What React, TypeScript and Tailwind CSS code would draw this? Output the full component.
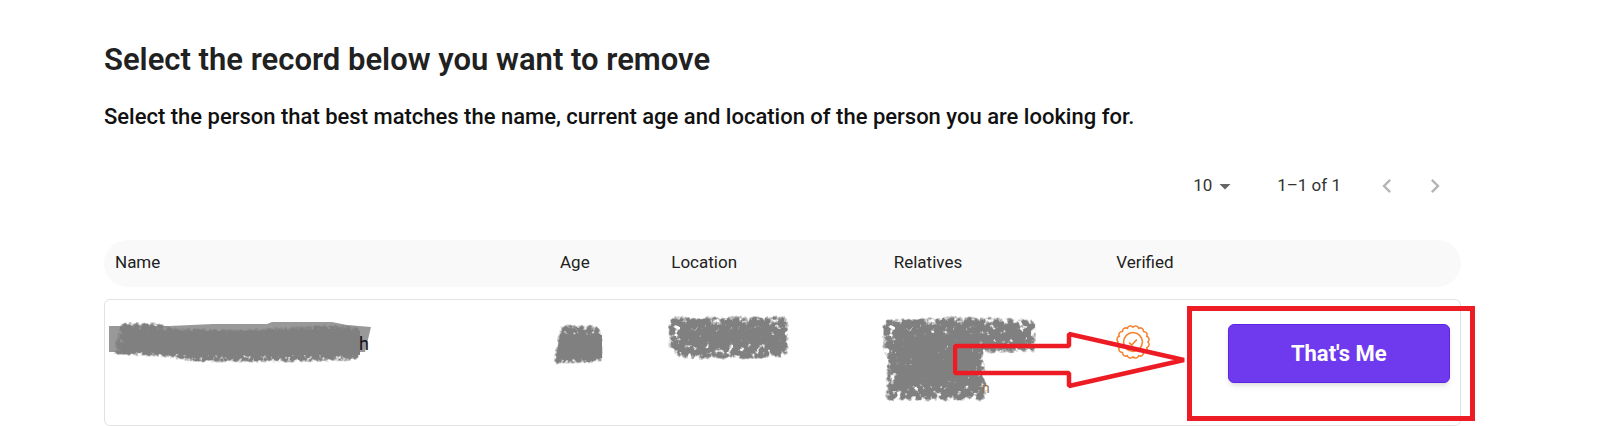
import React, { useState } from "react";

const COLUMNS = [
  { title: "Name", span: "col-span-4" },
  { title: "Age", span: "col-span-1" },
  { title: "Location", span: "col-span-2" },
  { title: "Relatives", span: "col-span-2" },
  { title: "Verified", span: "col-span-1" },
];

// scalloped outline of the badge
const scallops = (count: number, radius: number) => {
  const point = (i: number) => {
    const angle = (i / count) * Math.PI * 2;
    return `${(18 + radius * Math.cos(angle)).toFixed(2)} ${(18 + radius * Math.sin(angle)).toFixed(2)}`;
  };
  let d = `M${point(0)}`;
  for (let i = 1; i <= count; i++) {
    d += `A3.3 3.3 0 0 1 ${point(i)}`;
  }
  return d + "Z";
};

const VerifiedBadge = () => (
  <svg
    className="size-[34px]"
    viewBox="0.500 0.500 35 35"
    fill="none"
    stroke="#f5832f"
    strokeWidth="1.6"
    strokeLinejoin="round"
    role="img"
    aria-label="Verified"
  >
    <path d={scallops(16, 15.2)} />
    <circle cx="18" cy="18" r="9.7" />
    <path d="M14 18.500l2.700 2.700 5.300-5.700" />
  </svg>
);

const ChalkFilters = () => (
  <svg className="absolute size-0" aria-hidden="true">
    <filter id="chalk" x="-10%" y="-30%" width="120%" height="160%" colorInterpolationFilters="sRGB">
      <feGaussianBlur in="SourceAlpha" stdDeviation="2.6" result="soft" />
      <feTurbulence type="fractalNoise" baseFrequency="0.25" numOctaves="3" seed="4" result="noise" />
      <feComposite in="soft" in2="noise" operator="arithmetic" k1="2.4" k2="0.3" k4="-0.6" />
      <feComponentTransfer result="mask">
        <feFuncA type="linear" slope="1.6" />
      </feComponentTransfer>
      <feFlood floodColor="#808080" />
      <feComposite in2="mask" operator="in" />
    </filter>
    <filter id="mottled" x="-10%" y="-20%" width="120%" height="140%" colorInterpolationFilters="sRGB">
      <feGaussianBlur in="SourceAlpha" stdDeviation="3" result="soft" />
      <feTurbulence type="fractalNoise" baseFrequency="0.17" numOctaves="3" seed="9" result="noise" />
      <feComposite in="soft" in2="noise" operator="arithmetic" k1="3.4" k2="-0.2" k4="-0.6" />
      <feComponentTransfer result="mask">
        <feFuncA type="linear" slope="1.7" />
      </feComponentTransfer>
      <feFlood floodColor="#808080" />
      <feComposite in2="mask" operator="in" />
    </filter>
  </svg>
);

const NameScribble = () => (
  <svg className="absolute -left-2 top-4 h-16 w-72" viewBox="0 0 288 64" aria-hidden="true">
    <path d="M2 10H62L106 8L160 8L165 6H225L240 9L264 11L258 36H2Z" fill="#999" />
    <path d="M14 7L50 7L64 12L130 14L220 9L252 11V44L180 46H90L60 41L6 38Z" fill="#808080" filter="url(#chalk)" />
    <path d="M16 15H130L230 13L253 15V39H80L18 35Z" fill="#808080" />
    <text x="252" y="34" fontFamily="Roboto, sans-serif" fontSize="18" fill="#111">
      h
    </text>
  </svg>
);

const AgeScribble = () => (
  <svg className="absolute -left-2 top-4 h-16 w-16" viewBox="0 0 64 64" aria-hidden="true">
    <path d="M9 9L45 10L50 18V46L1 48Z" fill="#808080" filter="url(#chalk)" />
    <path d="M8 18L50 19V42L4 43Z" fill="#808080" />
  </svg>
);

const LocationScribble = () => (
  <svg className="absolute -left-2 top-2 h-20 w-36" viewBox="0 0 144 80" aria-hidden="true">
    <path d="M6 9H125V45L120 50H18L6 41Z" fill="#808080" filter="url(#mottled)" />
    <path d="M18 21L121 20L120 37L20 38Z" fill="#808080" filter="url(#chalk)" />
  </svg>
);

const RelativesScribble = () => (
  <svg className="absolute -left-4 top-2 h-24 w-44" viewBox="0 0 176 96" aria-hidden="true">
    <path d="M5 12L80 9L157 12V44H104L109 92H8L9 46L5 43Z" fill="#808080" filter="url(#mottled)" />
    <path d="M15 20L152 18V34L104 37V82H16Z" fill="#808080" filter="url(#mottled)" />
    <path d="M20 25L150 24V30L100 34V78H22L16 60L22 50Z" fill="#808080" filter="url(#chalk)" />
    <text x="104" y="85" fontFamily="Roboto, sans-serif" fontSize="14" fill="#95704d">
      n
    </text>
  </svg>
);

const Highlight = () => (
  <div className="pointer-events-none absolute -right-3.5 top-[66px] flex items-start" aria-hidden="true">
    <svg className="mt-6 h-[60px] w-[234px]" viewBox="0 0 234 60" fill="none" stroke="#ed1c24" strokeWidth="4.5">
      <path d="M2 16H116V4L231 30L116 56V43H2Z" strokeLinejoin="bevel" />
    </svg>
    <div className="h-[115px] w-72 border-5 border-[#ed1c24]" />
  </div>
);

const Pagination = () => {
  const [pageSize, setPageSize] = useState("10");

  return (
    <div className="mr-0.5 mt-[29px] flex h-12 items-center justify-end text-[17px] text-[#333]">
      <div className="relative mr-10 flex items-center">
        <select
          aria-label="Rows per page"
          value={pageSize}
          onChange={(e) => setPageSize(e.target.value)}
          className="w-11 appearance-none bg-transparent"
        >
          <option>10</option>
          <option>25</option>
          <option>50</option>
        </select>
        <svg className="pointer-events-none absolute right-0 size-6" viewBox="0 0 24 24" fill="#666">
          <path d="M6.500 10l5.500 5.500 5.500-5.500z" />
        </svg>
      </div>
      <span className="mr-[22px]">1–1 of 1</span>
      <button disabled aria-label="Previous page" className="flex size-12 items-center justify-center">
        <svg className="size-7" viewBox="0 0 24 24" fill="#b5b5b5">
          <path d="M15.410 7.410L14 6l-6 6 6 6 1.410-1.410L10.830 12z" />
        </svg>
      </button>
      <button disabled aria-label="Next page" className="flex size-12 items-center justify-center">
        <svg className="size-7" viewBox="0 0 24 24" fill="#b5b5b5">
          <path d="M10 6L8.590 7.410 13.170 12l-4.580 4.590L10 18l6-6z" />
        </svg>
      </button>
    </div>
  );
};

const App = () => {
  return (
    <main className="bg-white pl-[104px] pr-[139px] pt-10 font-['Roboto',sans-serif] text-[#212121]">
      <h1 className="text-[31px] font-semibold leading-10">Select the record below you want to remove</h1>
      <h2 className="mt-[21px] text-[22px] font-medium leading-8 text-[#111]">
        Select the person that best matches the name, current age and location of the person you are looking for.
      </h2>

      <Pagination />
      <ChalkFilters />

      <div className="relative mt-[30px]">
        <table className="block w-full">
          <thead className="block">
            <tr className="grid h-[47px] grid-cols-12 items-center rounded-full bg-[#f9f9f9] px-[11px] pb-0.5 text-[17px]">
              {COLUMNS.map(({ title, span }) => (
                <th key={title} scope="col" className={`${span} text-left font-normal`}>
                  {title}
                </th>
              ))}
              <td className="col-span-2" />
            </tr>
          </thead>
          <tbody className="mt-3 block">
            <tr className="grid h-[127px] grid-cols-12 rounded-md border border-[#e2e2e2] px-2.5">
              <td className="relative col-span-4">
                <NameScribble />
              </td>
              <td className="relative col-span-1">
                <AgeScribble />
              </td>
              <td className="relative col-span-2">
                <LocationScribble />
              </td>
              <td className="relative col-span-2">
                <RelativesScribble />
              </td>
              <td className="col-span-1 pt-[25px]">
                <VerifiedBadge />
              </td>
              <td className="col-span-2 pt-6">
                <button className="h-[59px] w-full rounded-md border border-[#5f22e6] bg-[#6f3aee] text-[22px] font-bold text-white shadow-md">
                  That's Me
                </button>
              </td>
            </tr>
          </tbody>
        </table>
        <Highlight />
      </div>
    </main>
  );
};

export default App;
